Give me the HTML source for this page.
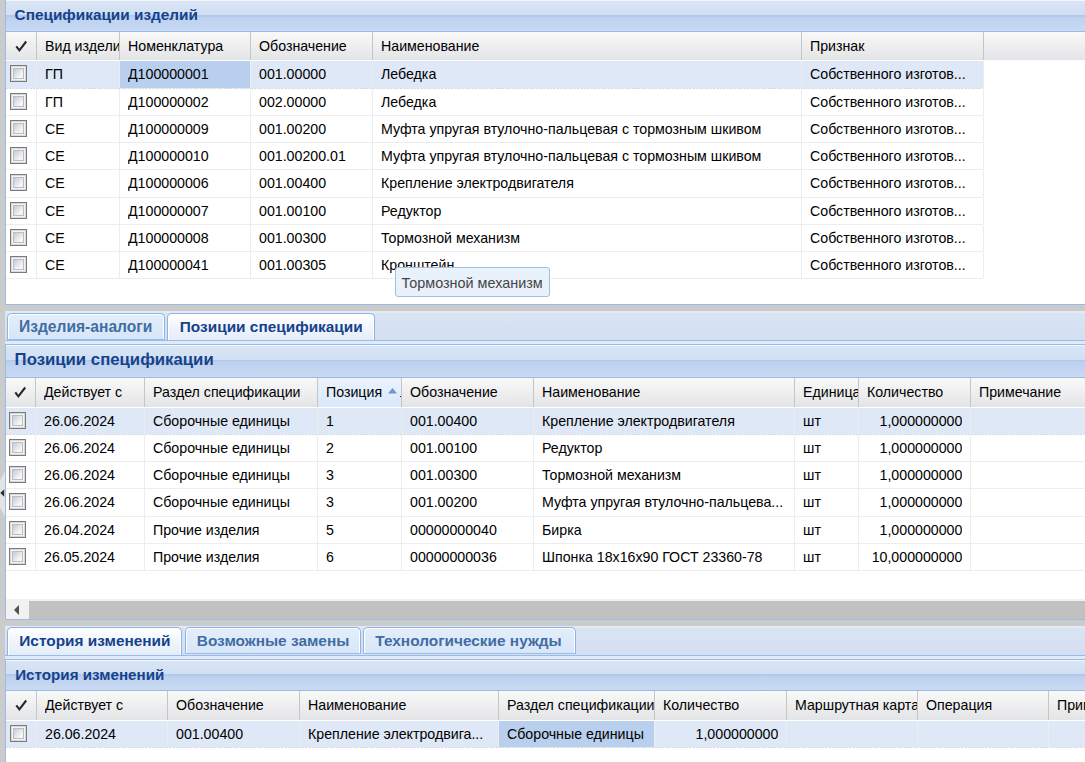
<!DOCTYPE html>
<html><head><meta charset="utf-8"><style>
*{margin:0;padding:0;box-sizing:border-box}
html,body{width:1085px;height:762px;overflow:hidden}
body{position:relative;background:#cbcbcb;font-family:"Liberation Sans",sans-serif;color:#000}
.a{position:absolute}
.t{position:absolute;white-space:nowrap}
.ph{background:linear-gradient(to bottom,#f3f7fc 0px,#f3f7fc 1px,#d9e5f5 1px,#d1dff3 15px,#aec7ec 15px,#b3caed 16.5px,#bcd0ef 16.5px,#c9daf2 100%)}
.ch{background:linear-gradient(to bottom,#f9f9f9,#e3e4e6)}
.cb{position:absolute;width:17px;height:17px;border:1px solid #7a7a7a;background:#e3e3e3;box-shadow:inset 1px 1px 0 #d9d9d9,inset -1px -1px 0 #d9d9d9}
.cb:after{content:"";box-sizing:border-box;position:absolute;left:2px;top:2px;width:11px;height:11px;border:1px solid #b9bdc5;background:linear-gradient(135deg,#c6cbd5,#f5f5f5 75%);box-shadow:0 0 0 1px #f4f4f4}
.tab{position:absolute;border:1px solid #8db2e3;border-bottom:none;border-radius:5px 5px 0 0;box-shadow:inset 1px 1px 0 #fff,inset -1px 0 0 #fff}
.tabi{background:linear-gradient(to bottom,#e4eefb,#d7e5f8)}
.taba{background:linear-gradient(to bottom,#ffffff,#e3ecf8)}
</style></head>
<body>
<div class="a" style="left:5px;top:0px;width:1080px;height:32px;border-left:1px solid #99bbe8;border-bottom:1px solid #99bbe8;background:linear-gradient(to bottom,#f3f7fc 0px,#f3f7fc 1px,#d9e5f5 1px,#d1dff3 15px,#aec7ec 15px,#b3caed 16.5px,#bcd0ef 16.5px,#c9daf2 100%);"></div>
<div class="t" style="left:14.60px;top:4.88px;font-size:15.35px;line-height:20px;font-weight:bold;color:#15428b;">Спецификации изделий</div>
<div class="a ch" style="left:5px;top:32px;width:1080px;height:28px;border-left:1px solid #99bbe8;"></div>
<div class="a" style="left:36px;top:32px;width:1px;height:28px;background:#c5c5c5;"></div>
<div class="a" style="left:119px;top:32px;width:1px;height:28px;background:#c5c5c5;"></div>
<div class="t" style="left:45.00px;top:36.08px;font-size:14.2px;line-height:20px;width:74.00px;overflow:hidden;">Вид изделия</div>
<div class="a" style="left:250px;top:32px;width:1px;height:28px;background:#c5c5c5;"></div>
<div class="t" style="left:128.00px;top:36.08px;font-size:14.2px;line-height:20px;width:122.00px;overflow:hidden;">Номенклатура</div>
<div class="a" style="left:372px;top:32px;width:1px;height:28px;background:#c5c5c5;"></div>
<div class="t" style="left:259.00px;top:36.08px;font-size:14.2px;line-height:20px;width:113.00px;overflow:hidden;">Обозначение</div>
<div class="a" style="left:801px;top:32px;width:1px;height:28px;background:#c5c5c5;"></div>
<div class="t" style="left:381.00px;top:36.08px;font-size:14.2px;line-height:20px;width:420.00px;overflow:hidden;">Наименование</div>
<div class="a" style="left:983px;top:32px;width:1px;height:28px;background:#c5c5c5;"></div>
<div class="t" style="left:810.00px;top:36.08px;font-size:14.2px;line-height:20px;width:173.00px;overflow:hidden;">Признак</div>
<div class="a" style="left:6px;top:60px;width:1079px;height:1px;background:#fbfbfb;"></div>
<svg class="a" style="left:10px;top:32px" width="22" height="26" viewBox="0 0 22 26"><path d="M6.3 14.3 L9.4 18.3 L16.2 9.5" fill="none" stroke="#262626" stroke-width="2.05" stroke-linejoin="miter" stroke-miterlimit="6"/><path d="M15.2 10.8 L16.6 9.0" stroke="#f0f0f0" stroke-width="0" /></svg>
<div class="a" style="left:5px;top:61px;width:1080px;height:244px;background:#fff;border-left:1px solid #99bbe8;border-bottom:1px solid #99bbe8;"></div>
<div class="a" style="left:6px;top:61px;width:977px;height:27px;background:#dfe8f6"></div>
<div class="a" style="left:120px;top:61px;width:130px;height:27px;background:#b9cfee"></div>
<div class="a" style="left:6px;top:88px;width:977px;height:1px;background:repeating-linear-gradient(90deg,#cfdcf0 0px,#cfdcf0 2px,#f3efe2 2px,#f3efe2 3.4px)"></div>
<div class="a" style="left:36px;top:61px;width:1px;height:27px;background:#ededed"></div>
<div class="a" style="left:119px;top:61px;width:1px;height:27px;background:#ededed"></div>
<div class="a" style="left:250px;top:61px;width:1px;height:27px;background:#ededed"></div>
<div class="a" style="left:372px;top:61px;width:1px;height:27px;background:#ededed"></div>
<div class="a" style="left:801px;top:61px;width:1px;height:27px;background:#ededed"></div>
<div class="a" style="left:983px;top:61px;width:1px;height:27px;background:#ededed"></div>
<div class="cb" style="left:10px;top:65px"></div>
<div class="t" style="left:45.00px;top:64.08px;font-size:14.2px;line-height:20px;width:74.00px;overflow:hidden;">ГП</div>
<div class="t" style="left:128.00px;top:64.08px;font-size:14.2px;line-height:20px;width:122.00px;overflow:hidden;">Д100000001</div>
<div class="t" style="left:259.00px;top:64.08px;font-size:14.2px;line-height:20px;width:113.00px;overflow:hidden;">001.00000</div>
<div class="t" style="left:381.00px;top:64.08px;font-size:14.2px;line-height:20px;width:420.00px;overflow:hidden;">Лебедка</div>
<div class="t" style="left:810.00px;top:64.08px;font-size:14.2px;line-height:20px;width:173.00px;overflow:hidden;">Собственного изготов...</div>
<div class="a" style="left:6px;top:115px;width:977px;height:1px;background:#ededed"></div>
<div class="a" style="left:36px;top:89px;width:1px;height:26px;background:#ededed"></div>
<div class="a" style="left:119px;top:89px;width:1px;height:26px;background:#ededed"></div>
<div class="a" style="left:250px;top:89px;width:1px;height:26px;background:#ededed"></div>
<div class="a" style="left:372px;top:89px;width:1px;height:26px;background:#ededed"></div>
<div class="a" style="left:801px;top:89px;width:1px;height:26px;background:#ededed"></div>
<div class="a" style="left:983px;top:89px;width:1px;height:26px;background:#ededed"></div>
<div class="cb" style="left:10px;top:93px"></div>
<div class="t" style="left:45.00px;top:92.08px;font-size:14.2px;line-height:20px;width:74.00px;overflow:hidden;">ГП</div>
<div class="t" style="left:128.00px;top:92.08px;font-size:14.2px;line-height:20px;width:122.00px;overflow:hidden;">Д100000002</div>
<div class="t" style="left:259.00px;top:92.08px;font-size:14.2px;line-height:20px;width:113.00px;overflow:hidden;">002.00000</div>
<div class="t" style="left:381.00px;top:92.08px;font-size:14.2px;line-height:20px;width:420.00px;overflow:hidden;">Лебедка</div>
<div class="t" style="left:810.00px;top:92.08px;font-size:14.2px;line-height:20px;width:173.00px;overflow:hidden;">Собственного изготов...</div>
<div class="a" style="left:6px;top:142px;width:977px;height:1px;background:#ededed"></div>
<div class="a" style="left:36px;top:116px;width:1px;height:26px;background:#ededed"></div>
<div class="a" style="left:119px;top:116px;width:1px;height:26px;background:#ededed"></div>
<div class="a" style="left:250px;top:116px;width:1px;height:26px;background:#ededed"></div>
<div class="a" style="left:372px;top:116px;width:1px;height:26px;background:#ededed"></div>
<div class="a" style="left:801px;top:116px;width:1px;height:26px;background:#ededed"></div>
<div class="a" style="left:983px;top:116px;width:1px;height:26px;background:#ededed"></div>
<div class="cb" style="left:10px;top:120px"></div>
<div class="t" style="left:45.00px;top:119.08px;font-size:14.2px;line-height:20px;width:74.00px;overflow:hidden;">СЕ</div>
<div class="t" style="left:128.00px;top:119.08px;font-size:14.2px;line-height:20px;width:122.00px;overflow:hidden;">Д100000009</div>
<div class="t" style="left:259.00px;top:119.08px;font-size:14.2px;line-height:20px;width:113.00px;overflow:hidden;">001.00200</div>
<div class="t" style="left:381.00px;top:119.08px;font-size:14.2px;line-height:20px;width:420.00px;overflow:hidden;">Муфта упругая втулочно-пальцевая с тормозным шкивом</div>
<div class="t" style="left:810.00px;top:119.08px;font-size:14.2px;line-height:20px;width:173.00px;overflow:hidden;">Собственного изготов...</div>
<div class="a" style="left:6px;top:169px;width:977px;height:1px;background:#ededed"></div>
<div class="a" style="left:36px;top:143px;width:1px;height:26px;background:#ededed"></div>
<div class="a" style="left:119px;top:143px;width:1px;height:26px;background:#ededed"></div>
<div class="a" style="left:250px;top:143px;width:1px;height:26px;background:#ededed"></div>
<div class="a" style="left:372px;top:143px;width:1px;height:26px;background:#ededed"></div>
<div class="a" style="left:801px;top:143px;width:1px;height:26px;background:#ededed"></div>
<div class="a" style="left:983px;top:143px;width:1px;height:26px;background:#ededed"></div>
<div class="cb" style="left:10px;top:147px"></div>
<div class="t" style="left:45.00px;top:146.08px;font-size:14.2px;line-height:20px;width:74.00px;overflow:hidden;">СЕ</div>
<div class="t" style="left:128.00px;top:146.08px;font-size:14.2px;line-height:20px;width:122.00px;overflow:hidden;">Д100000010</div>
<div class="t" style="left:259.00px;top:146.08px;font-size:14.2px;line-height:20px;width:113.00px;overflow:hidden;">001.00200.01</div>
<div class="t" style="left:381.00px;top:146.08px;font-size:14.2px;line-height:20px;width:420.00px;overflow:hidden;">Муфта упругая втулочно-пальцевая с тормозным шкивом</div>
<div class="t" style="left:810.00px;top:146.08px;font-size:14.2px;line-height:20px;width:173.00px;overflow:hidden;">Собственного изготов...</div>
<div class="a" style="left:6px;top:197px;width:977px;height:1px;background:#ededed"></div>
<div class="a" style="left:36px;top:170px;width:1px;height:27px;background:#ededed"></div>
<div class="a" style="left:119px;top:170px;width:1px;height:27px;background:#ededed"></div>
<div class="a" style="left:250px;top:170px;width:1px;height:27px;background:#ededed"></div>
<div class="a" style="left:372px;top:170px;width:1px;height:27px;background:#ededed"></div>
<div class="a" style="left:801px;top:170px;width:1px;height:27px;background:#ededed"></div>
<div class="a" style="left:983px;top:170px;width:1px;height:27px;background:#ededed"></div>
<div class="cb" style="left:10px;top:174px"></div>
<div class="t" style="left:45.00px;top:173.08px;font-size:14.2px;line-height:20px;width:74.00px;overflow:hidden;">СЕ</div>
<div class="t" style="left:128.00px;top:173.08px;font-size:14.2px;line-height:20px;width:122.00px;overflow:hidden;">Д100000006</div>
<div class="t" style="left:259.00px;top:173.08px;font-size:14.2px;line-height:20px;width:113.00px;overflow:hidden;">001.00400</div>
<div class="t" style="left:381.00px;top:173.08px;font-size:14.2px;line-height:20px;width:420.00px;overflow:hidden;">Крепление электродвигателя</div>
<div class="t" style="left:810.00px;top:173.08px;font-size:14.2px;line-height:20px;width:173.00px;overflow:hidden;">Собственного изготов...</div>
<div class="a" style="left:6px;top:224px;width:977px;height:1px;background:#ededed"></div>
<div class="a" style="left:36px;top:198px;width:1px;height:26px;background:#ededed"></div>
<div class="a" style="left:119px;top:198px;width:1px;height:26px;background:#ededed"></div>
<div class="a" style="left:250px;top:198px;width:1px;height:26px;background:#ededed"></div>
<div class="a" style="left:372px;top:198px;width:1px;height:26px;background:#ededed"></div>
<div class="a" style="left:801px;top:198px;width:1px;height:26px;background:#ededed"></div>
<div class="a" style="left:983px;top:198px;width:1px;height:26px;background:#ededed"></div>
<div class="cb" style="left:10px;top:202px"></div>
<div class="t" style="left:45.00px;top:201.08px;font-size:14.2px;line-height:20px;width:74.00px;overflow:hidden;">СЕ</div>
<div class="t" style="left:128.00px;top:201.08px;font-size:14.2px;line-height:20px;width:122.00px;overflow:hidden;">Д100000007</div>
<div class="t" style="left:259.00px;top:201.08px;font-size:14.2px;line-height:20px;width:113.00px;overflow:hidden;">001.00100</div>
<div class="t" style="left:381.00px;top:201.08px;font-size:14.2px;line-height:20px;width:420.00px;overflow:hidden;">Редуктор</div>
<div class="t" style="left:810.00px;top:201.08px;font-size:14.2px;line-height:20px;width:173.00px;overflow:hidden;">Собственного изготов...</div>
<div class="a" style="left:6px;top:251px;width:977px;height:1px;background:#ededed"></div>
<div class="a" style="left:36px;top:225px;width:1px;height:26px;background:#ededed"></div>
<div class="a" style="left:119px;top:225px;width:1px;height:26px;background:#ededed"></div>
<div class="a" style="left:250px;top:225px;width:1px;height:26px;background:#ededed"></div>
<div class="a" style="left:372px;top:225px;width:1px;height:26px;background:#ededed"></div>
<div class="a" style="left:801px;top:225px;width:1px;height:26px;background:#ededed"></div>
<div class="a" style="left:983px;top:225px;width:1px;height:26px;background:#ededed"></div>
<div class="cb" style="left:10px;top:229px"></div>
<div class="t" style="left:45.00px;top:228.08px;font-size:14.2px;line-height:20px;width:74.00px;overflow:hidden;">СЕ</div>
<div class="t" style="left:128.00px;top:228.08px;font-size:14.2px;line-height:20px;width:122.00px;overflow:hidden;">Д100000008</div>
<div class="t" style="left:259.00px;top:228.08px;font-size:14.2px;line-height:20px;width:113.00px;overflow:hidden;">001.00300</div>
<div class="t" style="left:381.00px;top:228.08px;font-size:14.2px;line-height:20px;width:420.00px;overflow:hidden;">Тормозной механизм</div>
<div class="t" style="left:810.00px;top:228.08px;font-size:14.2px;line-height:20px;width:173.00px;overflow:hidden;">Собственного изготов...</div>
<div class="a" style="left:6px;top:278px;width:977px;height:1px;background:#ededed"></div>
<div class="a" style="left:36px;top:252px;width:1px;height:26px;background:#ededed"></div>
<div class="a" style="left:119px;top:252px;width:1px;height:26px;background:#ededed"></div>
<div class="a" style="left:250px;top:252px;width:1px;height:26px;background:#ededed"></div>
<div class="a" style="left:372px;top:252px;width:1px;height:26px;background:#ededed"></div>
<div class="a" style="left:801px;top:252px;width:1px;height:26px;background:#ededed"></div>
<div class="a" style="left:983px;top:252px;width:1px;height:26px;background:#ededed"></div>
<div class="cb" style="left:10px;top:256px"></div>
<div class="t" style="left:45.00px;top:255.08px;font-size:14.2px;line-height:20px;width:74.00px;overflow:hidden;">СЕ</div>
<div class="t" style="left:128.00px;top:255.08px;font-size:14.2px;line-height:20px;width:122.00px;overflow:hidden;">Д100000041</div>
<div class="t" style="left:259.00px;top:255.08px;font-size:14.2px;line-height:20px;width:113.00px;overflow:hidden;">001.00305</div>
<div class="t" style="left:381.00px;top:255.08px;font-size:14.2px;line-height:20px;width:420.00px;overflow:hidden;">Кронштейн</div>
<div class="t" style="left:810.00px;top:255.08px;font-size:14.2px;line-height:20px;width:173.00px;overflow:hidden;">Собственного изготов...</div>
<div class="a" style="left:395px;top:267px;width:155px;height:30px;border:1px solid #a3bde3;border-radius:3px;background:#e9f1fb"></div>
<div class="t" style="left:401.60px;top:272.81px;font-size:14.4px;line-height:20px;color:#444;">Тормозной механизм</div>
<div class="a" style="left:5px;top:311px;width:1080px;height:34px;background:linear-gradient(to bottom,#e2eaf6 0px,#e2eaf6 2px,#d9e4f3 2px,#d2dff0 100%)"></div>
<div class="tab tabi" style="left:7px;top:313px;width:158px;height:27px"></div>
<div class="t" style="left:19.00px;top:317.09px;font-size:15.6px;line-height:20px;font-weight:bold;color:#416da3;">Изделия-аналоги</div>
<div class="a" style="left:7px;top:339px;width:158px;height:1px;background:#99bbe8"></div>
<div class="tab taba" style="left:167px;top:313px;width:208px;height:27px"></div>
<div class="t" style="left:179.80px;top:317.16px;font-size:15.4px;line-height:20px;font-weight:bold;color:#15428b;">Позиции спецификации</div>
<div class="a" style="left:5px;top:340px;width:1080px;height:1px;background:#99bbe8"></div>
<div class="a" style="left:5px;top:341px;width:1080px;height:3px;background:#e0ebfa"></div>
<div class="a" style="left:5px;top:344px;width:1080px;height:1px;background:#99bbe8"></div>
<div class="a" style="left:5px;top:345px;width:1080px;height:33px;border-left:1px solid #99bbe8;border-bottom:1px solid #99bbe8;background:linear-gradient(to bottom,#f3f7fc 0px,#f3f7fc 1px,#d9e5f5 1px,#d1dff3 15px,#aec7ec 15px,#b3caed 16.5px,#bcd0ef 16.5px,#c9daf2 100%);"></div>
<div class="t" style="left:14.60px;top:350.20px;font-size:16.75px;line-height:20px;font-weight:bold;color:#15428b;">Позиции спецификации</div>
<div class="a ch" style="left:5px;top:378px;width:1080px;height:29px;border-left:1px solid #99bbe8;"></div>
<div class="a" style="left:35px;top:378px;width:1px;height:29px;background:#c5c5c5;"></div>
<div class="a" style="left:144px;top:378px;width:1px;height:29px;background:#c5c5c5;"></div>
<div class="t" style="left:44.00px;top:382.08px;font-size:14.2px;line-height:20px;width:100.00px;overflow:hidden;">Действует с</div>
<div class="a" style="left:317px;top:378px;width:1px;height:29px;background:#c5c5c5;"></div>
<div class="t" style="left:153.00px;top:382.08px;font-size:14.2px;line-height:20px;width:164.00px;overflow:hidden;">Раздел спецификации</div>
<div class="a" style="left:318px;top:378px;width:83px;height:29px;background:linear-gradient(to bottom,#ebf3fd,#d9e8fb);"></div>
<div class="a" style="left:401px;top:378px;width:1px;height:29px;background:#c5c5c5;"></div>
<div class="t" style="left:326.00px;top:382.08px;font-size:14.2px;line-height:20px;width:75.00px;overflow:hidden;">Позиция</div>
<div class="a" style="left:533px;top:378px;width:1px;height:29px;background:#c5c5c5;"></div>
<div class="t" style="left:410.00px;top:382.08px;font-size:14.2px;line-height:20px;width:123.00px;overflow:hidden;">Обозначение</div>
<div class="a" style="left:794px;top:378px;width:1px;height:29px;background:#c5c5c5;"></div>
<div class="t" style="left:542.00px;top:382.08px;font-size:14.2px;line-height:20px;width:252.00px;overflow:hidden;">Наименование</div>
<div class="a" style="left:858px;top:378px;width:1px;height:29px;background:#c5c5c5;"></div>
<div class="t" style="left:803.00px;top:382.08px;font-size:14.2px;line-height:20px;width:55.00px;overflow:hidden;">Единица</div>
<div class="a" style="left:970px;top:378px;width:1px;height:29px;background:#c5c5c5;"></div>
<div class="t" style="left:867.00px;top:382.08px;font-size:14.2px;line-height:20px;width:103.00px;overflow:hidden;">Количество</div>
<div class="a" style="left:1200px;top:378px;width:1px;height:29px;background:#c5c5c5;"></div>
<div class="t" style="left:979.00px;top:382.08px;font-size:14.2px;line-height:20px;width:221.00px;overflow:hidden;">Примечание</div>
<div class="a" style="left:6px;top:407px;width:1079px;height:1px;background:#fbfbfb;"></div>
<svg class="a" style="left:9px;top:378px" width="22" height="26" viewBox="0 0 22 26"><path d="M6.3 14.3 L9.4 18.3 L16.2 9.5" fill="none" stroke="#262626" stroke-width="2.05" stroke-linejoin="miter" stroke-miterlimit="6"/><path d="M15.2 10.8 L16.6 9.0" stroke="#f0f0f0" stroke-width="0" /></svg>
<svg class="a" style="left:387px;top:387px" width="11" height="8"><path d="M1 6.5 L5.5 1 L10 6.5 Z" fill="#7096cb"/></svg>
<div class="a" style="left:399.5px;top:395.5px;width:1.5px;height:1.5px;background:#222"></div>
<div class="a" style="left:5px;top:407px;width:1080px;height:213px;background:#fff;border-left:1px solid #99bbe8;border-bottom:1px solid #99bbe8;"></div>
<div class="a" style="left:6px;top:408px;width:1079px;height:26px;background:#dfe8f6"></div>
<div class="a" style="left:6px;top:434px;width:1079px;height:1px;background:repeating-linear-gradient(90deg,#cfdcf0 0px,#cfdcf0 2px,#f3efe2 2px,#f3efe2 3.4px)"></div>
<div class="a" style="left:35px;top:408px;width:1px;height:26px;background:#ededed"></div>
<div class="a" style="left:144px;top:408px;width:1px;height:26px;background:#ededed"></div>
<div class="a" style="left:317px;top:408px;width:1px;height:26px;background:#ededed"></div>
<div class="a" style="left:401px;top:408px;width:1px;height:26px;background:#ededed"></div>
<div class="a" style="left:533px;top:408px;width:1px;height:26px;background:#ededed"></div>
<div class="a" style="left:794px;top:408px;width:1px;height:26px;background:#ededed"></div>
<div class="a" style="left:858px;top:408px;width:1px;height:26px;background:#ededed"></div>
<div class="a" style="left:970px;top:408px;width:1px;height:26px;background:#ededed"></div>
<div class="cb" style="left:9px;top:412px"></div>
<div class="t" style="left:44.00px;top:411.08px;font-size:14.2px;line-height:20px;width:100.00px;overflow:hidden;">26.06.2024</div>
<div class="t" style="left:153.00px;top:411.08px;font-size:14.2px;line-height:20px;width:164.00px;overflow:hidden;">Сборочные единицы</div>
<div class="t" style="left:326.00px;top:411.08px;font-size:14.2px;line-height:20px;width:75.00px;overflow:hidden;">1</div>
<div class="t" style="left:410.00px;top:411.08px;font-size:14.2px;line-height:20px;width:123.00px;overflow:hidden;">001.00400</div>
<div class="t" style="left:542.00px;top:411.08px;font-size:14.2px;line-height:20px;width:252.00px;overflow:hidden;">Крепление электродвигателя</div>
<div class="t" style="left:803.00px;top:411.08px;font-size:14.2px;line-height:20px;width:55.00px;overflow:hidden;">шт</div>
<div class="t" style="left:858.00px;top:411.08px;font-size:14.2px;line-height:20px;width:104.40px;overflow:hidden;text-align:right;">1,000000000</div>
<div class="a" style="left:6px;top:461px;width:1079px;height:1px;background:#ededed"></div>
<div class="a" style="left:35px;top:435px;width:1px;height:26px;background:#ededed"></div>
<div class="a" style="left:144px;top:435px;width:1px;height:26px;background:#ededed"></div>
<div class="a" style="left:317px;top:435px;width:1px;height:26px;background:#ededed"></div>
<div class="a" style="left:401px;top:435px;width:1px;height:26px;background:#ededed"></div>
<div class="a" style="left:533px;top:435px;width:1px;height:26px;background:#ededed"></div>
<div class="a" style="left:794px;top:435px;width:1px;height:26px;background:#ededed"></div>
<div class="a" style="left:858px;top:435px;width:1px;height:26px;background:#ededed"></div>
<div class="a" style="left:970px;top:435px;width:1px;height:26px;background:#ededed"></div>
<div class="cb" style="left:9px;top:439px"></div>
<div class="t" style="left:44.00px;top:438.08px;font-size:14.2px;line-height:20px;width:100.00px;overflow:hidden;">26.06.2024</div>
<div class="t" style="left:153.00px;top:438.08px;font-size:14.2px;line-height:20px;width:164.00px;overflow:hidden;">Сборочные единицы</div>
<div class="t" style="left:326.00px;top:438.08px;font-size:14.2px;line-height:20px;width:75.00px;overflow:hidden;">2</div>
<div class="t" style="left:410.00px;top:438.08px;font-size:14.2px;line-height:20px;width:123.00px;overflow:hidden;">001.00100</div>
<div class="t" style="left:542.00px;top:438.08px;font-size:14.2px;line-height:20px;width:252.00px;overflow:hidden;">Редуктор</div>
<div class="t" style="left:803.00px;top:438.08px;font-size:14.2px;line-height:20px;width:55.00px;overflow:hidden;">шт</div>
<div class="t" style="left:858.00px;top:438.08px;font-size:14.2px;line-height:20px;width:104.40px;overflow:hidden;text-align:right;">1,000000000</div>
<div class="a" style="left:6px;top:488px;width:1079px;height:1px;background:#ededed"></div>
<div class="a" style="left:35px;top:462px;width:1px;height:26px;background:#ededed"></div>
<div class="a" style="left:144px;top:462px;width:1px;height:26px;background:#ededed"></div>
<div class="a" style="left:317px;top:462px;width:1px;height:26px;background:#ededed"></div>
<div class="a" style="left:401px;top:462px;width:1px;height:26px;background:#ededed"></div>
<div class="a" style="left:533px;top:462px;width:1px;height:26px;background:#ededed"></div>
<div class="a" style="left:794px;top:462px;width:1px;height:26px;background:#ededed"></div>
<div class="a" style="left:858px;top:462px;width:1px;height:26px;background:#ededed"></div>
<div class="a" style="left:970px;top:462px;width:1px;height:26px;background:#ededed"></div>
<div class="cb" style="left:9px;top:466px"></div>
<div class="t" style="left:44.00px;top:465.08px;font-size:14.2px;line-height:20px;width:100.00px;overflow:hidden;">26.06.2024</div>
<div class="t" style="left:153.00px;top:465.08px;font-size:14.2px;line-height:20px;width:164.00px;overflow:hidden;">Сборочные единицы</div>
<div class="t" style="left:326.00px;top:465.08px;font-size:14.2px;line-height:20px;width:75.00px;overflow:hidden;">3</div>
<div class="t" style="left:410.00px;top:465.08px;font-size:14.2px;line-height:20px;width:123.00px;overflow:hidden;">001.00300</div>
<div class="t" style="left:542.00px;top:465.08px;font-size:14.2px;line-height:20px;width:252.00px;overflow:hidden;">Тормозной механизм</div>
<div class="t" style="left:803.00px;top:465.08px;font-size:14.2px;line-height:20px;width:55.00px;overflow:hidden;">шт</div>
<div class="t" style="left:858.00px;top:465.08px;font-size:14.2px;line-height:20px;width:104.40px;overflow:hidden;text-align:right;">1,000000000</div>
<div class="a" style="left:6px;top:516px;width:1079px;height:1px;background:#ededed"></div>
<div class="a" style="left:35px;top:489px;width:1px;height:27px;background:#ededed"></div>
<div class="a" style="left:144px;top:489px;width:1px;height:27px;background:#ededed"></div>
<div class="a" style="left:317px;top:489px;width:1px;height:27px;background:#ededed"></div>
<div class="a" style="left:401px;top:489px;width:1px;height:27px;background:#ededed"></div>
<div class="a" style="left:533px;top:489px;width:1px;height:27px;background:#ededed"></div>
<div class="a" style="left:794px;top:489px;width:1px;height:27px;background:#ededed"></div>
<div class="a" style="left:858px;top:489px;width:1px;height:27px;background:#ededed"></div>
<div class="a" style="left:970px;top:489px;width:1px;height:27px;background:#ededed"></div>
<div class="cb" style="left:9px;top:493px"></div>
<div class="t" style="left:44.00px;top:492.08px;font-size:14.2px;line-height:20px;width:100.00px;overflow:hidden;">26.06.2024</div>
<div class="t" style="left:153.00px;top:492.08px;font-size:14.2px;line-height:20px;width:164.00px;overflow:hidden;">Сборочные единицы</div>
<div class="t" style="left:326.00px;top:492.08px;font-size:14.2px;line-height:20px;width:75.00px;overflow:hidden;">3</div>
<div class="t" style="left:410.00px;top:492.08px;font-size:14.2px;line-height:20px;width:123.00px;overflow:hidden;">001.00200</div>
<div class="t" style="left:542.00px;top:492.08px;font-size:14.2px;line-height:20px;width:252.00px;overflow:hidden;">Муфта упругая втулочно-пальцева...</div>
<div class="t" style="left:803.00px;top:492.08px;font-size:14.2px;line-height:20px;width:55.00px;overflow:hidden;">шт</div>
<div class="t" style="left:858.00px;top:492.08px;font-size:14.2px;line-height:20px;width:104.40px;overflow:hidden;text-align:right;">1,000000000</div>
<div class="a" style="left:6px;top:543px;width:1079px;height:1px;background:#ededed"></div>
<div class="a" style="left:35px;top:517px;width:1px;height:26px;background:#ededed"></div>
<div class="a" style="left:144px;top:517px;width:1px;height:26px;background:#ededed"></div>
<div class="a" style="left:317px;top:517px;width:1px;height:26px;background:#ededed"></div>
<div class="a" style="left:401px;top:517px;width:1px;height:26px;background:#ededed"></div>
<div class="a" style="left:533px;top:517px;width:1px;height:26px;background:#ededed"></div>
<div class="a" style="left:794px;top:517px;width:1px;height:26px;background:#ededed"></div>
<div class="a" style="left:858px;top:517px;width:1px;height:26px;background:#ededed"></div>
<div class="a" style="left:970px;top:517px;width:1px;height:26px;background:#ededed"></div>
<div class="cb" style="left:9px;top:521px"></div>
<div class="t" style="left:44.00px;top:520.08px;font-size:14.2px;line-height:20px;width:100.00px;overflow:hidden;">26.04.2024</div>
<div class="t" style="left:153.00px;top:520.08px;font-size:14.2px;line-height:20px;width:164.00px;overflow:hidden;">Прочие изделия</div>
<div class="t" style="left:326.00px;top:520.08px;font-size:14.2px;line-height:20px;width:75.00px;overflow:hidden;">5</div>
<div class="t" style="left:410.00px;top:520.08px;font-size:14.2px;line-height:20px;width:123.00px;overflow:hidden;">00000000040</div>
<div class="t" style="left:542.00px;top:520.08px;font-size:14.2px;line-height:20px;width:252.00px;overflow:hidden;">Бирка</div>
<div class="t" style="left:803.00px;top:520.08px;font-size:14.2px;line-height:20px;width:55.00px;overflow:hidden;">шт</div>
<div class="t" style="left:858.00px;top:520.08px;font-size:14.2px;line-height:20px;width:104.40px;overflow:hidden;text-align:right;">1,000000000</div>
<div class="a" style="left:6px;top:570px;width:1079px;height:1px;background:#ededed"></div>
<div class="a" style="left:35px;top:544px;width:1px;height:26px;background:#ededed"></div>
<div class="a" style="left:144px;top:544px;width:1px;height:26px;background:#ededed"></div>
<div class="a" style="left:317px;top:544px;width:1px;height:26px;background:#ededed"></div>
<div class="a" style="left:401px;top:544px;width:1px;height:26px;background:#ededed"></div>
<div class="a" style="left:533px;top:544px;width:1px;height:26px;background:#ededed"></div>
<div class="a" style="left:794px;top:544px;width:1px;height:26px;background:#ededed"></div>
<div class="a" style="left:858px;top:544px;width:1px;height:26px;background:#ededed"></div>
<div class="a" style="left:970px;top:544px;width:1px;height:26px;background:#ededed"></div>
<div class="cb" style="left:9px;top:548px"></div>
<div class="t" style="left:44.00px;top:547.08px;font-size:14.2px;line-height:20px;width:100.00px;overflow:hidden;">26.05.2024</div>
<div class="t" style="left:153.00px;top:547.08px;font-size:14.2px;line-height:20px;width:164.00px;overflow:hidden;">Прочие изделия</div>
<div class="t" style="left:326.00px;top:547.08px;font-size:14.2px;line-height:20px;width:75.00px;overflow:hidden;">6</div>
<div class="t" style="left:410.00px;top:547.08px;font-size:14.2px;line-height:20px;width:123.00px;overflow:hidden;">00000000036</div>
<div class="t" style="left:542.00px;top:547.08px;font-size:14.2px;line-height:20px;width:252.00px;overflow:hidden;">Шпонка 18х16х90 ГОСТ 23360-78</div>
<div class="t" style="left:803.00px;top:547.08px;font-size:14.2px;line-height:20px;width:55.00px;overflow:hidden;">шт</div>
<div class="t" style="left:858.00px;top:547.08px;font-size:14.2px;line-height:20px;width:104.40px;overflow:hidden;text-align:right;">10,000000000</div>
<div class="a" style="left:6px;top:599px;width:1079px;height:20px;background:#f1f1f1"></div>
<div class="a" style="left:29px;top:601px;width:1056px;height:18px;background:#c1c1c1"></div>
<svg class="a" style="left:12px;top:604px" width="10" height="12"><path d="M2 6 L7 1 L7 11 Z" fill="#505050"/></svg>
<div class="a" style="left:5px;top:626px;width:1080px;height:34px;background:linear-gradient(to bottom,#e2eaf6 0px,#e2eaf6 2px,#d9e4f3 2px,#d2dff0 100%)"></div>
<div class="tab taba" style="left:7px;top:627px;width:175px;height:28px"></div>
<div class="t" style="left:19.30px;top:631.26px;font-size:15.4px;line-height:20px;font-weight:bold;color:#15428b;">История изменений</div>
<div class="tab tabi" style="left:185px;top:627px;width:176px;height:28px"></div>
<div class="t" style="left:196.80px;top:631.26px;font-size:15.4px;line-height:20px;font-weight:bold;color:#416da3;">Возможные замены</div>
<div class="a" style="left:185px;top:653px;width:176px;height:1px;background:#99bbe8"></div>
<div class="a" style="left:185px;top:654px;width:176px;height:1px;background:#d6e1f1"></div>
<div class="tab tabi" style="left:363px;top:627px;width:213px;height:28px"></div>
<div class="t" style="left:375.30px;top:631.26px;font-size:15.4px;line-height:20px;font-weight:bold;color:#416da3;">Технологические нужды</div>
<div class="a" style="left:363px;top:653px;width:213px;height:1px;background:#99bbe8"></div>
<div class="a" style="left:363px;top:654px;width:213px;height:1px;background:#d6e1f1"></div>
<div class="a" style="left:5px;top:655px;width:1080px;height:1px;background:#99bbe8"></div>
<div class="a" style="left:5px;top:656px;width:1080px;height:3px;background:#e0ebfa"></div>
<div class="a" style="left:5px;top:659px;width:1080px;height:1px;background:#99bbe8"></div>
<div class="a" style="left:5px;top:660px;width:1080px;height:31px;border-left:1px solid #99bbe8;border-bottom:1px solid #99bbe8;background:linear-gradient(to bottom,#f3f7fc 0px,#f3f7fc 1px,#d9e5f5 1px,#d1dff3 14px,#aec7ec 14px,#b3caed 15.5px,#bcd0ef 15.5px,#c9daf2 100%);"></div>
<div class="t" style="left:15.20px;top:665.13px;font-size:15.2px;line-height:20px;font-weight:bold;color:#15428b;">История изменений</div>
<div class="a ch" style="left:5px;top:691px;width:1080px;height:29px;border-left:1px solid #99bbe8;"></div>
<div class="a" style="left:36px;top:691px;width:1px;height:29px;background:#c5c5c5;"></div>
<div class="a" style="left:167px;top:691px;width:1px;height:29px;background:#c5c5c5;"></div>
<div class="t" style="left:45.00px;top:695.08px;font-size:14.2px;line-height:20px;width:122.00px;overflow:hidden;">Действует с</div>
<div class="a" style="left:299px;top:691px;width:1px;height:29px;background:#c5c5c5;"></div>
<div class="t" style="left:176.00px;top:695.08px;font-size:14.2px;line-height:20px;width:123.00px;overflow:hidden;">Обозначение</div>
<div class="a" style="left:498px;top:691px;width:1px;height:29px;background:#c5c5c5;"></div>
<div class="t" style="left:308.00px;top:695.08px;font-size:14.2px;line-height:20px;width:190.00px;overflow:hidden;">Наименование</div>
<div class="a" style="left:654px;top:691px;width:1px;height:29px;background:#c5c5c5;"></div>
<div class="t" style="left:507.00px;top:695.08px;font-size:14.2px;line-height:20px;width:147.00px;overflow:hidden;">Раздел спецификации</div>
<div class="a" style="left:786px;top:691px;width:1px;height:29px;background:#c5c5c5;"></div>
<div class="t" style="left:663.00px;top:695.08px;font-size:14.2px;line-height:20px;width:123.00px;overflow:hidden;">Количество</div>
<div class="a" style="left:917px;top:691px;width:1px;height:29px;background:#c5c5c5;"></div>
<div class="t" style="left:795.00px;top:695.08px;font-size:14.2px;line-height:20px;width:122.00px;overflow:hidden;">Маршрутная карта</div>
<div class="a" style="left:1048px;top:691px;width:1px;height:29px;background:#c5c5c5;"></div>
<div class="t" style="left:926.00px;top:695.08px;font-size:14.2px;line-height:20px;width:122.00px;overflow:hidden;">Операция</div>
<div class="a" style="left:1200px;top:691px;width:1px;height:29px;background:#c5c5c5;"></div>
<div class="t" style="left:1057.00px;top:695.08px;font-size:14.2px;line-height:20px;width:143.00px;overflow:hidden;">Примечание</div>
<div class="a" style="left:6px;top:720px;width:1079px;height:1px;background:#fbfbfb;"></div>
<svg class="a" style="left:10px;top:691px" width="22" height="26" viewBox="0 0 22 26"><path d="M6.3 14.3 L9.4 18.3 L16.2 9.5" fill="none" stroke="#262626" stroke-width="2.05" stroke-linejoin="miter" stroke-miterlimit="6"/><path d="M15.2 10.8 L16.6 9.0" stroke="#f0f0f0" stroke-width="0" /></svg>
<div class="a" style="left:5px;top:720px;width:1080px;height:42px;background:#fff;border-left:1px solid #99bbe8;"></div>
<div class="a" style="left:6px;top:721px;width:1079px;height:26px;background:#dfe8f6"></div>
<div class="a" style="left:499px;top:721px;width:155px;height:26px;background:#b9cfee"></div>
<div class="a" style="left:6px;top:747px;width:1079px;height:1px;background:repeating-linear-gradient(90deg,#cfdcf0 0px,#cfdcf0 2px,#f3efe2 2px,#f3efe2 3.4px)"></div>
<div class="a" style="left:36px;top:721px;width:1px;height:26px;background:#ededed"></div>
<div class="a" style="left:167px;top:721px;width:1px;height:26px;background:#ededed"></div>
<div class="a" style="left:299px;top:721px;width:1px;height:26px;background:#ededed"></div>
<div class="a" style="left:498px;top:721px;width:1px;height:26px;background:#ededed"></div>
<div class="a" style="left:654px;top:721px;width:1px;height:26px;background:#ededed"></div>
<div class="a" style="left:786px;top:721px;width:1px;height:26px;background:#ededed"></div>
<div class="a" style="left:917px;top:721px;width:1px;height:26px;background:#ededed"></div>
<div class="a" style="left:1048px;top:721px;width:1px;height:26px;background:#ededed"></div>
<div class="cb" style="left:10px;top:725px"></div>
<div class="t" style="left:45.00px;top:724.08px;font-size:14.2px;line-height:20px;width:122.00px;overflow:hidden;">26.06.2024</div>
<div class="t" style="left:176.00px;top:724.08px;font-size:14.2px;line-height:20px;width:123.00px;overflow:hidden;">001.00400</div>
<div class="t" style="left:308.00px;top:724.08px;font-size:14.2px;line-height:20px;width:190.00px;overflow:hidden;">Крепление электродвига...</div>
<div class="t" style="left:507.00px;top:724.08px;font-size:14.2px;line-height:20px;width:147.00px;overflow:hidden;">Сборочные единицы</div>
<div class="t" style="left:654.00px;top:724.08px;font-size:14.2px;line-height:20px;width:124.40px;overflow:hidden;text-align:right;">1,000000000</div>
<svg class="a" style="left:0;top:470px" width="5" height="48"><path d="M5 1 L5 47 L0 37 L0 11 Z" fill="#e4e4e4"/><path d="M0.3 23 L4.2 19.3 L4.2 26.7 Z" fill="#2e2e2e"/></svg>
</body></html>
